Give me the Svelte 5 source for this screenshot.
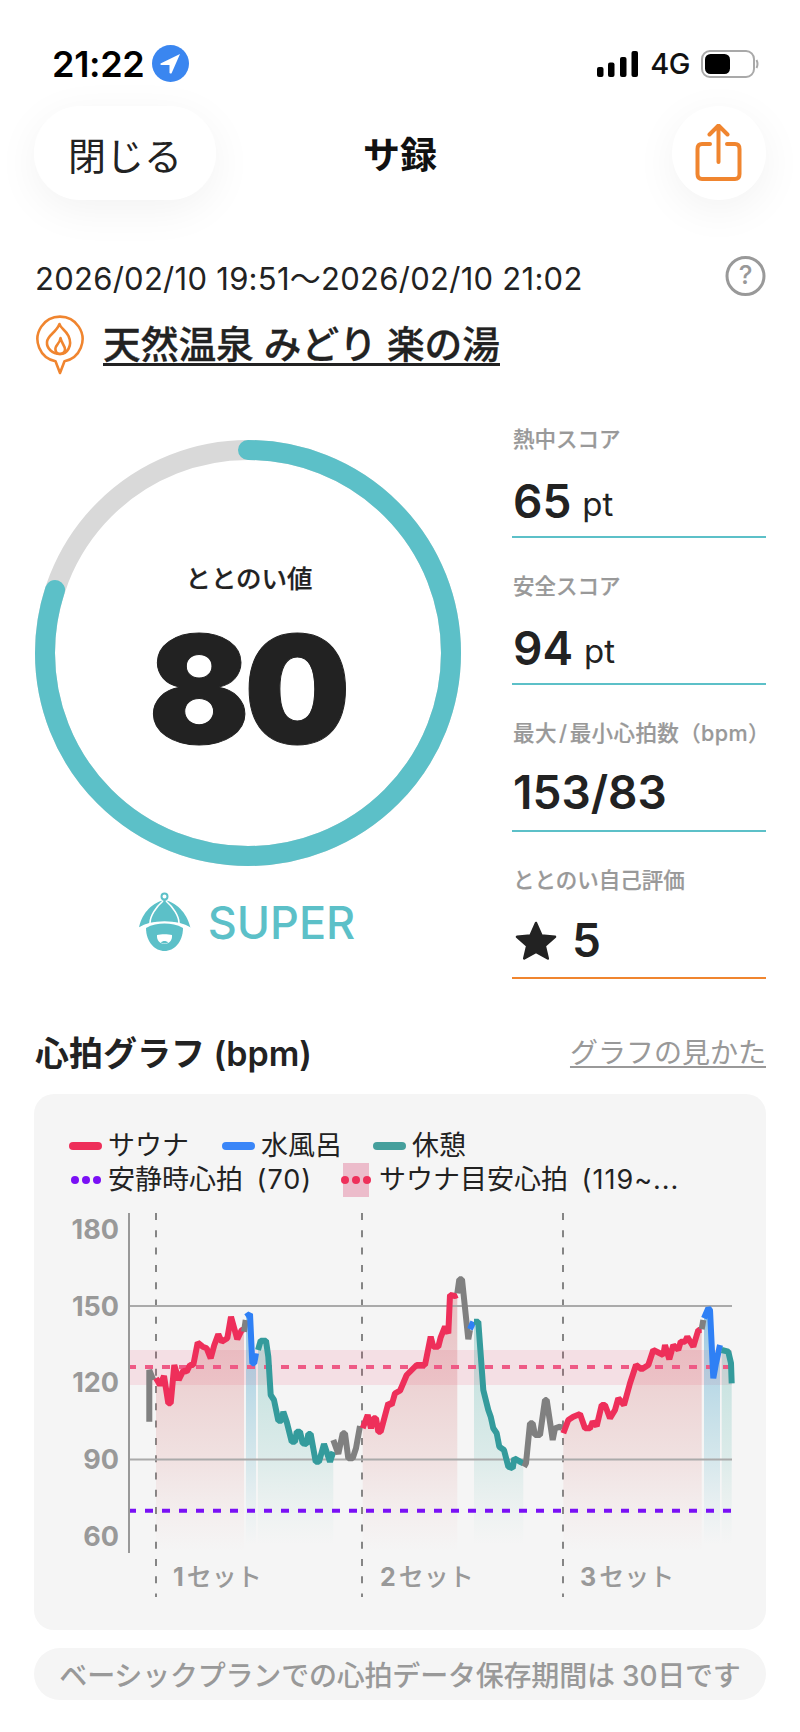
<script>
  const P6 = (a) => a.map(([x, y]) => [20 + x / 3, 1300 + y / 3]);
  const P7 = (a) => a.map(([x, y]) => [400 + x / 3, 1300 + y / 3]);
  const str = (pts) => pts.map((p) => p[0].toFixed(1) + ',' + p[1].toFixed(1)).join(' ');
  const RED = '#ee2f5a', BLUE = '#2f80f5', TEAL = '#349b9c', GRAY = '#808080';

  const segs = [
    { c: GRAY, p: P6([[388,365],[388,210],[400,240]]) },
    { c: RED, f: 'r', p: P6([[408,235],[420,255],[432,228],[445,310],[452,310],[463,195],[476,240],[490,212],[500,215],[510,195],[520,195],[533,128],[548,140],[560,145],[572,175],[583,135],[595,103],[605,125],[622,115],[633,50],[652,118],[665,90],[672,88]]) },
    { c: GRAY, p: P6([[672,95],[677,60]]) },
    { c: BLUE, f: 'b', p: P6([[678,50],[690,42],[697,190],[703,190],[708,160]]) },
    { c: TEAL, f: 't', p: P6([[714,150],[722,122],[738,122],[745,170],[752,285],[762,300],[775,362],[785,362],[790,335],[800,365],[815,425],[825,425],[830,395],[840,395],[848,430],[860,432],[865,402],[872,402],[887,485],[897,485],[912,432],[930,485],[940,455]]) },
    { c: GRAY, p: P6([[940,420],[955,462],[968,400],[975,400],[985,475],[998,475],[1008,445],[1020,378]]) },
    { c: RED, f: 'r', p: P6([[1028,385],[1043,345],[1053,385],[1060,355],[1068,355],[1075,395],[1082,395],[1105,310],[1115,315],[1125,280]]).concat(P7([[0,272],[20,225],[35,210],[50,195],[75,195],[92,110],[100,140],[115,140],[122,112],[135,80],[145,100],[150,-15],[165,-12],[172,-15]])) },
    { c: GRAY, p: P7([[172,-20],[178,-62],[186,-62],[205,118],[210,90]]) },
    { c: BLUE, p: P7([[210,88],[220,65]]) },
    { c: TEAL, f: 't', p: P7([[222,65],[235,65],[250,270],[265,330],[272,350],[280,385],[290,400],[298,440],[312,450],[325,500],[338,505],[343,475],[360,485],[370,490]]) },
    { c: GRAY, p: P7([[372,500],[378,490],[390,370],[398,370],[405,405],[420,405],[435,300],[440,300],[458,420],[465,385],[480,380],[487,385]]) },
    { c: RED, f: 'r', p: P7([[490,400],[505,360],[520,350],[540,342],[555,385],[570,385],[578,365],[590,378],[605,315],[615,315],[630,355],[645,330],[655,295],[672,315],[690,250],[708,195],[725,208],[745,195],[760,150],[790,165],[795,135],[808,178],[820,135],[835,150],[842,125],[855,125],[862,110],[880,140],[895,90],[905,90]]) },
    { c: GRAY, p: P7([[905,88],[910,60]]) },
    { c: BLUE, f: 'b', p: P7([[912,55],[925,25],[930,30],[940,235],[948,190],[960,135]]) },
    { c: TEAL, f: 't', p: P7([[965,150],[985,155],[993,190],[995,250]]) }
  ];
  const area = (p) => str(p) + ` ${p[p.length - 1][0].toFixed(1)},1550 ${p[0][0].toFixed(1)},1550`;
  const fills = segs.filter((s) => s.f);

  const ticks = [[180, 1239], [150, 1316], [120, 1392], [90, 1469], [60, 1546]];
  const grid = [1306, 1459.5];
  const sets = [[156, 173, '1'], [362, 380, '2'], [563, 580, '3']];

  const stats = [
    { label: '熱中スコア', value: '65', unit: 'pt' },
    { label: '安全スコア', value: '94', unit: 'pt' },
    { label: '最大\u200a/\u200a最小心拍数（bpm）', value: '153/83', wide: true }
  ];
  const R = 203;
  const C = 2 * Math.PI * R;
</script>

<div class="page">
  <div class="status">
    <div class="time-wrap">
      <span class="time">21:22</span>
      <svg class="loc" viewBox="0 0 37 37" width="37" height="37">
        <circle cx="18.5" cy="18.5" r="18.5" fill="#3a86f0"/>
        <path d="M28 9 L8.5 18.5 Q8 20 9.5 20 L17.5 20 L17.5 28 Q19 29 19.7 28 Z" fill="#fff"/>
      </svg>
    </div>
    <div class="sys">
      <svg width="41" height="26" viewBox="0 0 41 26">
        <rect x="0" y="16" width="6.5" height="10" rx="2" fill="#000"/>
        <rect x="11" y="11.5" width="6.5" height="14.5" rx="2" fill="#000"/>
        <rect x="23" y="6" width="6.5" height="20" rx="2" fill="#000"/>
        <rect x="34.5" y="0" width="6.5" height="26" rx="2" fill="#000"/>
      </svg>
      <span class="net">4G</span>
      <svg width="58" height="28" viewBox="0 0 58 28">
        <rect x="1" y="1" width="52" height="26" rx="8" fill="#fff" stroke="#a9a9a9" stroke-width="2"/>
        <rect x="4" y="4" width="25" height="20" rx="5.5" fill="#000"/>
        <path d="M55.5 10 Q57.5 14 55.5 18" fill="none" stroke="#a9a9a9" stroke-width="2"/>
      </svg>
    </div>
  </div>

  <div class="nav">
    <div class="close">閉じる</div>
    <div class="title">サ録</div>
    <div class="share">
      <svg width="50" height="60" viewBox="0 0 50 60" fill="none" stroke="#f0852f" stroke-width="4" stroke-linecap="round" stroke-linejoin="round">
        <path d="M16 20 H8 Q3.5 20 3.5 25 V50 Q3.5 55 8 55 H41 Q45.5 55 45.5 50 V25 Q45.5 20 41 20 H33"/>
        <path d="M24.5 38 V2 M15.5 10.5 L24.5 1.5 L33.5 10.5"/>
      </svg>
    </div>
  </div>

  <div class="date-row">
    <span class="date">2026/02/10 19:51～2026/02/10 21:02</span>
    <svg class="help" width="41" height="40" viewBox="0 0 41 40">
      <circle cx="20.5" cy="20" r="18.5" fill="#fff" stroke="#999" stroke-width="3"/>
      <text x="20.5" y="28" text-anchor="middle" class="q">?</text>
    </svg>
  </div>

  <div class="venue-row">
    <svg width="48" height="60" viewBox="0 0 48 60" fill="none" stroke="#f0852f" stroke-width="2.6" stroke-linejoin="round">
      <path d="M19.5 46.2 A22.5 22.5 0 1 1 28.5 46.2 L24 58 Z" fill="#fff"/>
      <path d="M23.5 9 C25 14 29 14 32.500 21 C37 31 31 39 24 39 C16 39 10.500 33 11 27 C11.500 20 20 18 23.500 9 Z"/>
      <path d="M24.500 23 C24 29 18.500 30 19.500 35 C20 38 22.500 39 24 39 C26.500 39 29 37 29 34.500 C29 30.500 25.500 28.500 24.500 23 Z"/>
    </svg>
    <span class="venue">天然温泉 みどり 楽の湯</span>
  </div>

  <div class="main">
    <div class="left">
      <div class="ring">
        <svg width="428" height="428" viewBox="0 0 428 428">
          <circle cx="214" cy="214" r={R} fill="none" stroke="#d9d9d9" stroke-width="20"/>
          <circle cx="214" cy="214" r={R} fill="none" stroke="#5cc0c8" stroke-width="20" stroke-linecap="round"
            stroke-dasharray="{C * 0.8} {C}" transform="rotate(-90 214 214)"/>
        </svg>
        <div class="ring-text">
          <div class="ring-label">ととのい値</div>
          <div class="ring-num">80</div>
        </div>
      </div>
      <div class="rank">
        <svg width="54" height="60" viewBox="0 0 54 60">
          <circle cx="26.500" cy="4.500" r="3" fill="none" stroke="#5cc0c8" stroke-width="2"/>
          <path d="M1 36 C3 24 12 11 26.500 8 C41 11 50 24 52.500 36 C44 31 36 30 26.500 30 C17 30 9 31 1 36 Z" fill="#5cc0c8"/>
          <path d="M12 31 C12 24 18 15 25 9 M41 31 C41 24 35 15 28 9" fill="none" stroke="#fff" stroke-width="1.600"/>
          <path d="M1 36 C9 31 17 30 26.500 30 C36 30 44 31 52.500 36" fill="none" stroke="#fff" stroke-width="1.400"/>
          <path d="M8 36 C14 32.500 20 31.500 26.500 31.500 C33 31.500 39 32.500 45 36 C45 50 36 59 26.500 59 C17 59 8 50 8 36 Z" fill="#5cc0c8"/>
          <path d="M19 43 C23 42 30 42 34 43 C34.500 48.500 31 52 26.500 52 C22 52 18.500 48.500 19 43 Z" fill="#fff"/>
          <path d="M23 50.500 C24.500 48.500 28.500 48.500 30 50.500 C28.500 51.800 24.500 51.800 23 50.500 Z" fill="#5cc0c8"/>
        </svg>
        <span class="rank-text">SUPER</span>
      </div>
    </div>

    <div class="stats">
      {#each stats as s}
        <div class="stat">
          <div class="stat-label" class:wide={s.wide}>{s.label}</div>
          <div class="stat-value">{s.value}{#if s.unit}<span class="unit">{s.unit}</span>{/if}</div>
        </div>
      {/each}
      <div class="stat">
        <div class="stat-label">ととのい自己評価</div>
        <div class="stat-value self-value">
          <svg class="star" width="42" height="39" viewBox="0 0 42 39">
            <path d="M21 2 L26.500 14.500 L40 15.800 L29.800 24.800 L32.800 37.500 L21 30.800 L9.200 37.500 L12.200 24.800 L2 15.800 L15.500 14.500 Z" fill="#222" stroke="#222" stroke-width="2.500" stroke-linejoin="round"/>
          </svg>5
        </div>
      </div>
    </div>
  </div>

  <div class="graph-head">
    <span class="graph-title">心拍グラフ (bpm)</span>
    <span class="graph-link">グラフの見かた</span>
  </div>

  <div class="card">
    <div class="legend">
      <div class="legend-row">
        <span class="item first"><i class="sw red"></i>サウナ</span>
        <span class="item second"><i class="sw blue"></i>水風呂</span>
        <span class="item"><i class="sw teal"></i>休憩</span>
      </div>
      <div class="legend-row">
        <span class="item wide"><span class="dots purple"><i></i><i></i><i></i></span>安静時心拍 <span class="latin">(70)</span></span>
        <span class="item"><span class="band"><span class="dots pink"><i></i><i></i><i></i></span></span>サウナ目安心拍 <span class="latin">(119~...</span></span>
      </div>
    </div>

    <svg class="chart" width="732" height="430" viewBox="34 1200 732 430">
      <defs>
        <linearGradient id="gr" gradientUnits="userSpaceOnUse" x1="0" y1="1320" x2="0" y2="1552">
          <stop offset="0" stop-color="#cf5a62" stop-opacity="0.32"/>
          <stop offset="0.6" stop-color="#d9807f" stop-opacity="0.17"/>
          <stop offset="1" stop-color="#e8a0a0" stop-opacity="0"/>
        </linearGradient>
        <linearGradient id="gb" gradientUnits="userSpaceOnUse" x1="0" y1="1320" x2="0" y2="1545">
          <stop offset="0" stop-color="#4a9fd0" stop-opacity="0.5"/>
          <stop offset="0.6" stop-color="#6ab8cc" stop-opacity="0.24"/>
          <stop offset="1" stop-color="#8ccad6" stop-opacity="0"/>
        </linearGradient>
        <linearGradient id="gt" gradientUnits="userSpaceOnUse" x1="0" y1="1320" x2="0" y2="1545">
          <stop offset="0" stop-color="#3aa8a0" stop-opacity="0.32"/>
          <stop offset="0.6" stop-color="#5cb8ae" stop-opacity="0.17"/>
          <stop offset="1" stop-color="#8ccac0" stop-opacity="0"/>
        </linearGradient>
      </defs>

      {#each ticks as t}
        <text class="tick" x="119" y={t[1]} text-anchor="end">{t[0]}</text>
      {/each}

      {#each sets as s}
        <line x1={s[0]} x2={s[0]} y1="1213" y2="1597" stroke="#858585" stroke-width="2" stroke-dasharray="7 10.300"/>
        <text class="set" x={s[1]} y="1586"><tspan class="set-num">{s[2]}</tspan><tspan dx="3">セット</tspan></text>
      {/each}

      <rect x="129" y="1350" width="603" height="35" fill="#ee2f5a" fill-opacity="0.11"/>

      {#each fills as s}
        <polygon points={area(s.p)} fill="url(#g{s.f})"/>
      {/each}

      {#each grid as y}
        <line x1="129" x2="732" y1={y} y2={y} stroke="#aaa" stroke-width="2"/>
      {/each}

      <line x1="129" x2="732" y1="1367" y2="1367" stroke="#ee5a85" stroke-width="4" stroke-dasharray="8 9" stroke-dashoffset="1"/>
      <line x1="129" x2="732" y1="1510.700" y2="1510.700" stroke="#7a10f5" stroke-width="4" stroke-dasharray="8 9" stroke-dashoffset="1"/>

      <line x1="129" x2="129" y1="1213" y2="1553" stroke="#999" stroke-width="2"/>

      {#each segs as s}
        <polyline points={str(s.p)} fill="none" stroke={s.c} stroke-width="6" stroke-linejoin="bevel"/>
      {/each}
    </svg>
  </div>

  <div class="notice">ベーシックプランでの心拍データ保存期間は 30日です</div>
</div>

<style>
  :global(body) { margin: 0; background: #fff; }
  .page {
    width: 800px;
    height: 1732px;
    overflow: hidden;
    background: #fff;
    color: #222;
    font-family: Inter, "Noto Sans CJK JP", sans-serif;
  }
  .status {
    height: 106px;
    box-sizing: border-box;
    padding: 45px 40px 0 52px;
    display: flex;
    justify-content: space-between;
    align-items: flex-start;
  }
  .time-wrap { display: flex; align-items: center; gap: 7px; height: 37px; }
  .time { font-size: 36px; font-weight: 600; color: #000; letter-spacing: -0.3px; }
  .sys { display: flex; align-items: center; gap: 11px; height: 37px; margin-right: 1px; }
  .sys svg:first-child { margin-top: 1px; margin-right: 1px; }
  .net { font-size: 29px; font-weight: 500; color: #111; margin-right: 0; letter-spacing: -0.5px; }

  .nav {
    height: 94px;
    padding: 0 34px;
    display: grid;
    grid-template-columns: 1fr auto 1fr;
    align-items: center;
  }
  .close {
    width: 182px;
    height: 94px;
    border-radius: 46px;
    background: #fff;
    box-shadow: 0 10px 44px rgba(0, 0, 0, 0.055);
    display: flex;
    align-items: center;
    justify-content: center;
    font-size: 38px;
    color: #222;
  }
  .title { font-size: 37px; font-weight: 700; color: #111; }
  .share {
    width: 94px;
    height: 94px;
    justify-self: end;
    border-radius: 50%;
    background: #fff;
    box-shadow: 0 10px 44px rgba(0, 0, 0, 0.055);
    display: flex;
    align-items: center;
    justify-content: center;
  }
  .share svg { margin-top: 2px; }

  .date-row {
    margin-top: 56px;
    height: 40px;
    padding: 0 34px 0 35px;
    display: flex;
    align-items: center;
    justify-content: space-between;
  }
  .date { font-size: 31px; color: #222; letter-spacing: 0.27px; }
  .q { font-size: 26px; font-weight: 500; fill: #999; font-family: Inter, sans-serif; }

  .venue-row {
    margin-top: 19px;
    padding: 0 36px;
    display: flex;
    align-items: flex-start;
    gap: 19px;
    height: 60px;
  }
  .venue {
    font-size: 37.700px;
    font-weight: 500;
    color: #222;
    line-height: 58px;
    text-decoration: underline;
    text-decoration-thickness: 3px;
    text-underline-offset: 5px;
    white-space: nowrap;
    -webkit-text-stroke: 0.3px #222;
  }

  .main {
    margin-top: 49px;
    padding: 0 34px;
    display: flex;
    justify-content: space-between;
    align-items: flex-start;
    height: 600px;
  }
  .left { width: 428px; padding-top: 15px; display: flex; flex-direction: column; align-items: center; }
  .ring { position: relative; width: 428px; height: 428px; }
  .ring svg { display: block; }
  .ring-text {
    position: absolute;
    inset: 0;
    display: flex;
    flex-direction: column;
    align-items: center;
  }
  .ring-label { margin-top: 122px; font-size: 25.500px; font-weight: 500; line-height: 36px; color: #222; margin-left: 2px; -webkit-text-stroke: 0.2px #222; }
  .ring-num { margin-top: 13px; font-size: 150px; font-weight: 900; line-height: 160px; color: #222; letter-spacing: -6px; margin-left: -3px; -webkit-text-stroke: 1px #222; }
  .rank { margin-top: 25px; display: flex; align-items: center; gap: 16px; margin-left: -3px; }
  .rank-text { font-size: 45px; font-weight: 550; color: #5cc0c8; letter-spacing: 0; }

  .stats { width: 254px; display: flex; flex-direction: column; gap: 33px; }
  .stat { height: 114px; box-sizing: border-box; border-bottom: 2px solid #5cc0c8; }
  .stat:last-child { border-bottom-color: #f0852f; }
  .stat-label {
    height: 30px;
    line-height: 30px;
    font-size: 21.500px;
    font-weight: 500;
    color: #999;
    white-space: nowrap;
    padding-left: 1px;
    -webkit-text-stroke: 0.2px #999;
  }
  .stat-label.wide { letter-spacing: 0.4px; }
  .stat-value {
    margin-top: 14px;
    line-height: 60px;
    font-size: 46px;
    font-weight: 600;
    color: #222;
    padding-left: 1px;
    display: flex;
    align-items: center;
  }
  .self-value { margin-top: 15px; }
  .unit { font-size: 33px; font-weight: 400; margin-left: 11px; margin-top: 6px; }
  .star { margin: 0 15px 0 2px; }

  .graph-head {
    height: 60px;
    padding: 0 34px 0 35px;
    display: flex;
    align-items: center;
    justify-content: space-between;
  }
  .graph-title { font-size: 34px; font-weight: 600; color: #222; margin-top: -6px; }
  .graph-link {
    font-size: 28px;
    color: #999;
    text-decoration: underline;
    text-decoration-thickness: 2px;
    text-underline-offset: 3px;
    margin-top: -6px;
  }

  .card {
    margin: 10px 34px 0;
    height: 536px;
    box-sizing: border-box;
    border-radius: 20px;
    background: #f5f5f5;
    padding-top: 35px;
    position: relative;
  }
  .legend { padding-left: 35px; height: 72px; display: flex; flex-direction: column; }
  .legend-row { display: flex; align-items: center; height: 34px; }
  .item { display: inline-flex; align-items: center; font-size: 27px; color: #222; white-space: pre; line-height: 34px; }
  .item.first { width: 153px; }
  .item.second { width: 151px; }
  .item.wide { width: 274px; }
  .latin { margin-left: 6px; letter-spacing: 1px; }
  .sw { display: block; width: 33px; height: 8px; border-radius: 4px; margin-right: 6px; }
  .sw.red { background: #ee2f5a; }
  .sw.blue { background: #3a86f8; }
  .sw.teal { background: #459f9c; }
  .dots { display: inline-flex; gap: 3px; width: 33px; justify-content: center; margin-right: 6px; }
  .dots i { display: block; width: 8px; height: 8px; border-radius: 50%; }
  .dots.purple i { background: #7a10f5; }
  .dots.pink i { background: #ee2f5a; }
  .band {
    width: 26px;
    height: 34px;
    background: #ecbccb;
    display: inline-flex;
    align-items: center;
    justify-content: center;
    margin: 0 10px 0 0;
  }
  .band .dots { margin: 0; flex: none; }
  .chart { display: block; position: absolute; left: 0; bottom: 0; }
  .tick { font-size: 27px; font-weight: 700; fill: #999; font-family: Inter, sans-serif; }
  .set { font-size: 25px; font-weight: 500; fill: #999; font-family: Inter, "Noto Sans CJK JP", sans-serif; }
  .set-num { font-weight: 700; }

  .notice {
    margin: 18px 34px 0;
    height: 52px;
    border-radius: 26px;
    background: #f5f5f5;
    display: flex;
    align-items: center;
    justify-content: center;
    font-size: 28px;
    font-weight: 500;
    color: #999;
    white-space: nowrap;
    letter-spacing: -0.2px;
  }
</style>
